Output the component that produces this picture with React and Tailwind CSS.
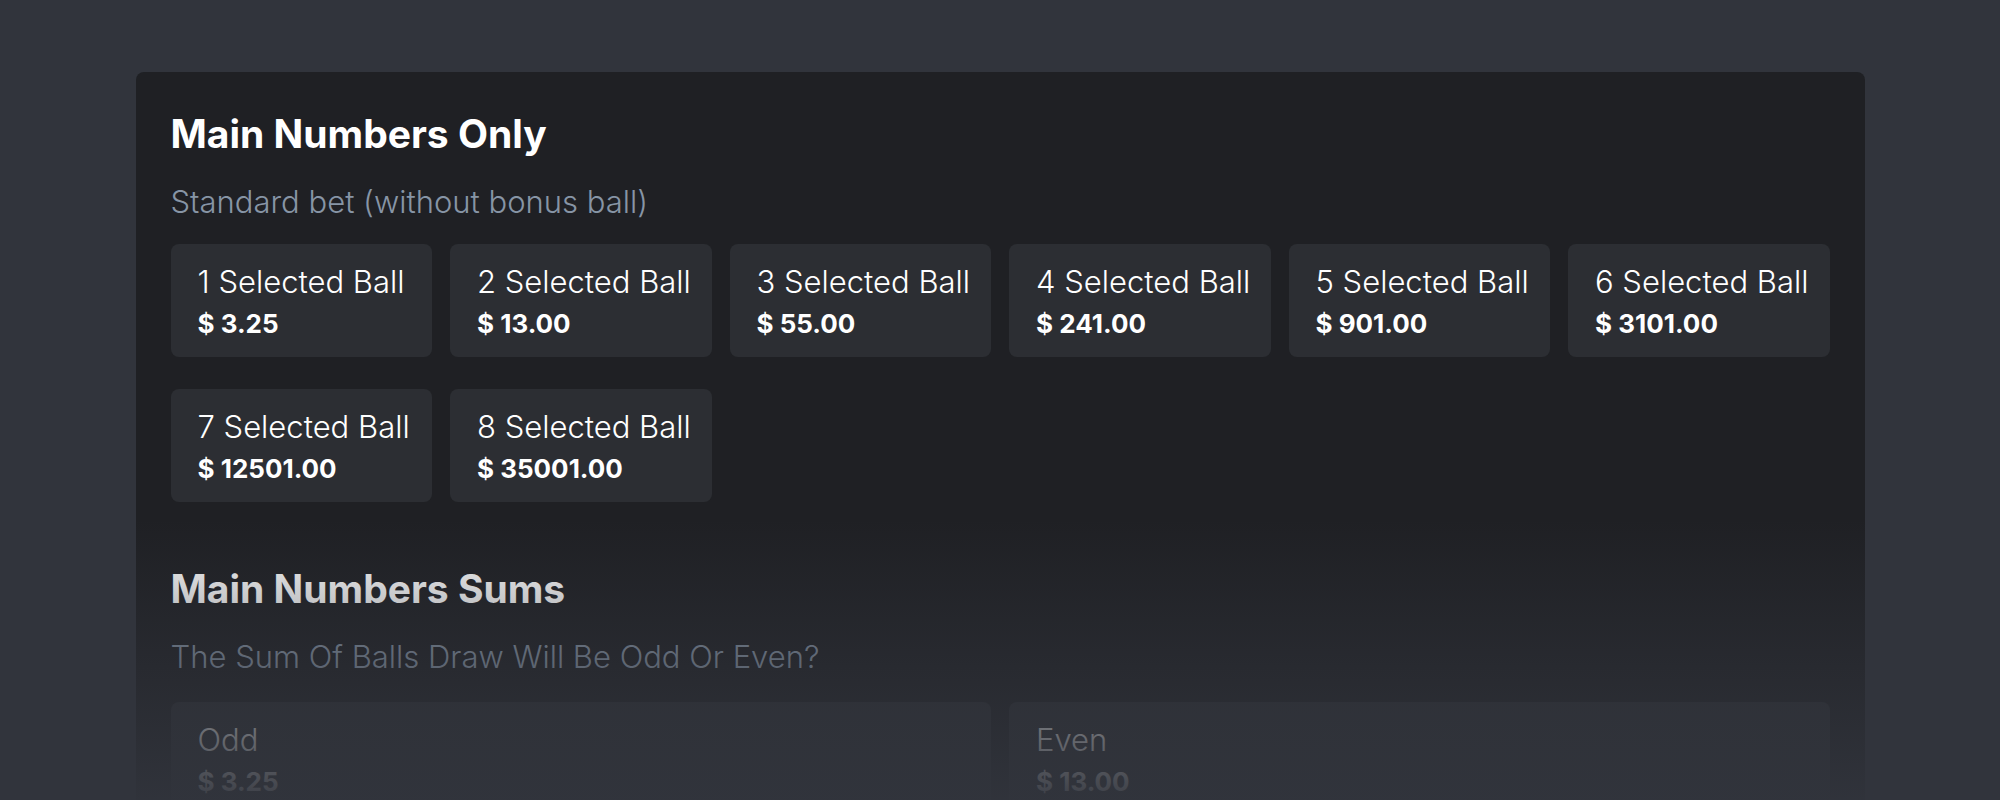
const mainNumbers = [
  { label: "1 Selected Ball", price: "3.25" },
  { label: "2 Selected Ball", price: "13.00" },
  { label: "3 Selected Ball", price: "55.00" },
  { label: "4 Selected Ball", price: "241.00" },
  { label: "5 Selected Ball", price: "901.00" },
  { label: "6 Selected Ball", price: "3101.00" },
  { label: "7 Selected Ball", price: "12501.00" },
  { label: "8 Selected Ball", price: "35001.00" },
];

const sums = [
  { label: "Odd", price: "3.25" },
  { label: "Even", price: "13.00" },
];

function BetCard({ label, price }) {
  return (
    <button
      type="button"
      className="flex flex-col items-start rounded-lg bg-[#2c2e33] px-[27px] pt-[15px] pb-[14px] text-left whitespace-nowrap text-white"
    >
      <span className="text-[31px] leading-[46px] font-light">{label}</span>
      <span className="text-[26px] leading-[38px] font-bold">$ {price}</span>
    </button>
  );
}

function Section({ title, subtitle, children, className = "" }) {
  return (
    <section className={className}>
      <h2 className="text-[39px] leading-[54px] font-bold text-white">{title}</h2>
      <p className="mt-[18px] text-[31px] leading-[45px] font-light text-[#8795a6]">{subtitle}</p>
      {children}
    </section>
  );
}

export default function App() {
  return (
    <div className="relative h-[800px] overflow-hidden bg-[#31343c] pt-[72px] font-['Inter',sans-serif]">
      <div className="mx-auto w-[1729px] rounded-lg bg-[#1f2024] p-[35px] pb-[120px]">
        <Section title="Main Numbers Only" subtitle="Standard bet (without bonus ball)">
          <div className="mt-[20px] grid grid-cols-6 gap-x-[18px] gap-y-[32px]">
            {mainNumbers.map((item) => (
              <BetCard key={item.label} {...item} />
            ))}
          </div>
        </Section>

        <Section
          className="mt-[60px]"
          title="Main Numbers Sums"
          subtitle="The Sum Of Balls Draw Will Be Odd Or Even?"
        >
          <div className="mt-[23px] grid grid-cols-2 gap-[18px]">
            {sums.map((item) => (
              <BetCard key={item.label} {...item} />
            ))}
          </div>
        </Section>
      </div>

      {/* fade out towards the bottom of the viewport */}
      <div className="pointer-events-none absolute inset-x-0 bottom-0 h-[280px] bg-linear-to-b from-[#31343c]/0 to-[#31343c]/95" />
    </div>
  );
}
